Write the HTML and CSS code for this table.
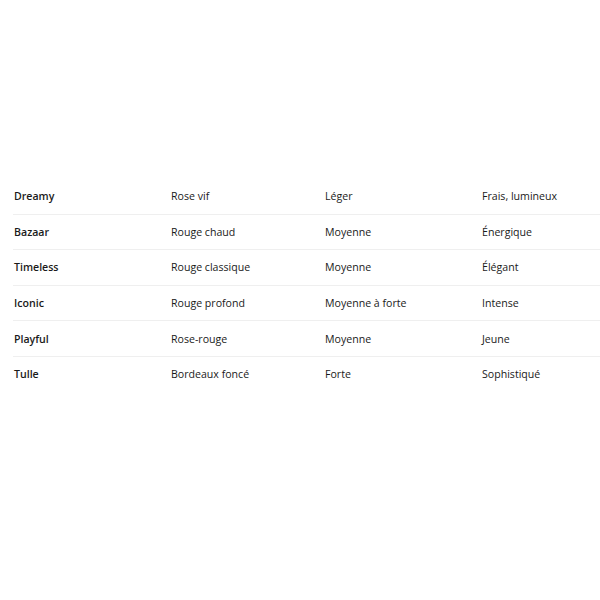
FILE: index.html
```html
<!DOCTYPE html>
<html lang="fr">
<head>
<meta charset="utf-8">
<link rel="stylesheet" href="styles.css">
</head>
<body>
<div class="wrap">
<table class="tbl">
<colgroup><col class="c1"><col class="c2"><col class="c3"><col class="c4"></colgroup>
<tbody>
<tr><td class="name">Dreamy</td><td>Rose vif</td><td>Léger</td><td>Frais, lumineux</td></tr>
<tr><td class="name">Bazaar</td><td>Rouge chaud</td><td>Moyenne</td><td>Énergique</td></tr>
<tr><td class="name">Timeless</td><td>Rouge classique</td><td>Moyenne</td><td>Élégant</td></tr>
<tr><td class="name">Iconic</td><td>Rouge profond</td><td>Moyenne à forte</td><td>Intense</td></tr>
<tr><td class="name">Playful</td><td>Rose-rouge</td><td>Moyenne</td><td>Jeune</td></tr>
<tr><td class="name">Tulle</td><td>Bordeaux foncé</td><td>Forte</td><td>Sophistiqué</td></tr>
</tbody>
</table>
</div>
</body>
</html>
```
FILE: styles.css
```css
html, body {
  margin: 0;
  padding: 0;
  background: #ffffff;
}
.wrap {
  padding: 179px 0 0 13px;
}
.tbl {
  border-collapse: collapse;
  table-layout: fixed;
  width: 587px;
  font-family: "Open Sans", "Noto Sans", sans-serif;
  font-size: 10.6px;
  color: #1a1a1a;
}
.c1 { width: 157px; }
.c2 { width: 154px; }
.c3 { width: 157px; }
.c4 { width: 119px; }
.tbl td {
  height: 34.6px;
  padding: 0 0 0 1px;
  vertical-align: middle;
  border-top: 1px solid #efefef;
  white-space: nowrap;
}
.tbl tr:first-child td {
  border-top: none;
}
.tbl td.name {
  font-weight: 600;
}
```
